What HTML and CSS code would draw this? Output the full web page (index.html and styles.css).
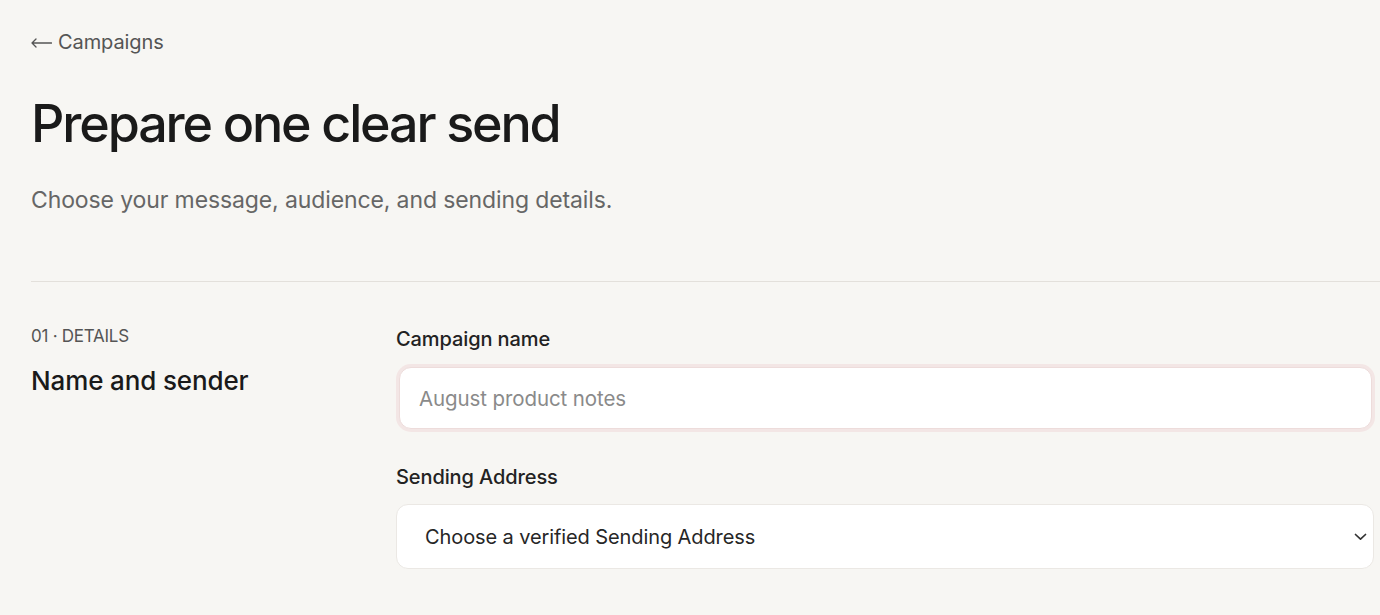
FILE: index.html
```html
<!DOCTYPE html>
<html lang="en">
<head>
<meta charset="utf-8">
<title>Prepare one clear send</title>
<link rel="stylesheet" href="styles.css">
</head>
<body>
<main class="page">
  <a class="back" href="#"><svg class="arrow" width="21" height="10" viewBox="0 0 21 10" aria-hidden="true"><path d="M1 5 H20.5 M5 1 L1 5 L5 9" fill="none" stroke="#555" stroke-width="1.3" stroke-linecap="round" stroke-linejoin="round"/></svg><span>Campaigns</span></a>
  <h1 class="title">Prepare one clear send</h1>
  <p class="subtitle">Choose your message, audience, and sending details.</p>
  <hr class="divider">
  <section class="section">
    <div class="section-head">
      <div class="eyebrow">01 · DETAILS</div>
      <h2 class="section-title">Name and sender</h2>
    </div>
    <div class="fields">
      <label class="field">
        <span class="label">Campaign name</span>
        <span class="input focused"><span class="placeholder">August product notes</span></span>
      </label>
      <label class="field">
        <span class="label">Sending Address</span>
        <span class="input select">
          <span class="value">Choose a verified Sending Address</span>
          <svg class="chev" width="13" height="8" viewBox="0 0 13 8" aria-hidden="true"><path d="M1.5 1.5 L6.5 6.2 L11.5 1.5" fill="none" stroke="#333" stroke-width="1.7" stroke-linecap="round" stroke-linejoin="round"/></svg>
        </span>
      </label>
    </div>
  </section>
</main>
</body>
</html>
```
FILE: styles.css
```css
html, body {
  margin: 0;
  padding: 0;
  background: #f7f6f3;
}
body {
  font-family: Inter, "Liberation Sans", Arial, sans-serif;
  color: #1c1c1c;
  overflow: hidden;
}
.page {
  padding: 28px 0 0 31px;
  display: flex;
  flex-direction: column;
}
.back {
  display: flex;
  align-items: center;
  gap: 6px;
  color: #555;
  text-decoration: none;
  font-size: 20px;
  line-height: 28px;
  letter-spacing: -0.005em;
}
.arrow {
  display: block;
  margin-top: 1px;
}
.title {
  margin: 36px 0 0 0;
  font-size: 52px;
  font-weight: 500;
  letter-spacing: -0.041em;
  line-height: 64px;
  color: #1a1a1a;
}
.subtitle {
  margin: 29px 0 0 0;
  font-size: 23px;
  line-height: 30px;
  color: #666;
  letter-spacing: -0.005em;
}
.divider {
  margin: 66px 0 0 0;
  border: 0;
  border-top: 1px solid #e3e0db;
  height: 0;
}
.section {
  margin-top: 43px;
  display: grid;
  grid-template-columns: 365px 1fr;
}
.eyebrow {
  font-size: 17px;
  line-height: 22px;
  color: #555;
  letter-spacing: -0.015em;
}
.section-title {
  margin: 18px 0 0 0;
  font-size: 26px;
  font-weight: 500;
  line-height: 32px;
  color: #1a1a1a;
  letter-spacing: -0.005em;
}
.fields {
  display: flex;
  flex-direction: column;
  gap: 35px;
  padding-right: 6px;
  margin-top: 1px;
}
.field {
  display: flex;
  flex-direction: column;
  gap: 14px;
}
.label {
  font-size: 20px;
  font-weight: 500;
  line-height: 26px;
  color: #222;
  letter-spacing: -0.005em;
}
.input {
  display: flex;
  align-items: center;
  height: 65px;
  box-sizing: border-box;
  background: #fff;
  border: 1px solid #ebe8e4;
  border-radius: 12px;
  padding: 0 22px;
}
.input.focused {
  border: 1px solid #eddcdb;
  box-shadow: 0 0 0 3px #f3e6e5;
  height: 62px;
  margin-top: 1px;
  margin-left: 3px;
  margin-right: 2px;
  padding-left: 19px;
}
.placeholder {
  font-size: 20.5px;
  color: #8a8a8a;
  letter-spacing: -0.005em;
}
.select {
  justify-content: space-between;
  padding: 0 6px 0 28px;
}
.value {
  font-size: 20px;
  color: #262626;
  letter-spacing: -0.005em;
}
.chev {
  display: block;
}
```
